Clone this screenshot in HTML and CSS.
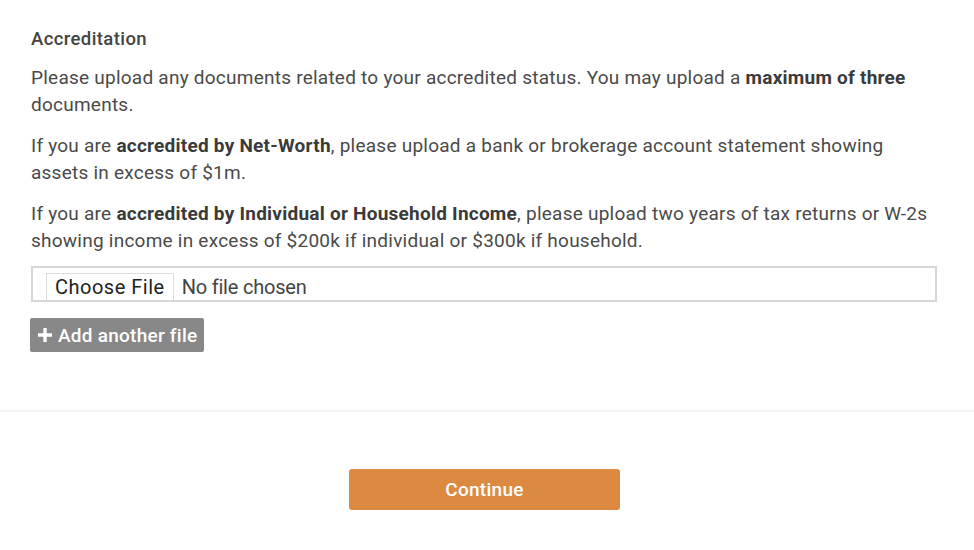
FILE: index.html
```html
<!DOCTYPE html>
<html>
<head>
<meta charset="utf-8">
<link rel="stylesheet" href="styles.css">
</head>
<body>
<div class="section">
  <h3 class="title">Accreditation</h3>
  <p class="para">Please upload any documents related to your accredited status. You may upload a <strong>maximum of three</strong> documents.</p>
  <p class="para">If you are <strong>accredited by Net-Worth</strong>, please upload a bank or brokerage account statement showing assets in excess of $1m.</p>
  <p class="para para-last">If you are <strong>accredited by Individual or Household Income</strong>, please upload two years of tax returns or W-2s showing income in excess of $200k if individual or $300k if household.</p>
  <div class="file-input">
    <span class="file-btn">Choose File</span>
    <span class="file-text">No file chosen</span>
  </div>
  <button class="add-btn"><svg class="plus" viewBox="0 0 14 14" width="14" height="14"><path d="M5.3 0h3.4v5.3H14v3.4H8.7V14H5.3V8.7H0V5.3h5.3z" fill="#fff"/></svg>Add another file</button>
</div>
<div class="footer">
  <button class="continue">Continue</button>
</div>
</body>
</html>
```
FILE: styles.css
```css
html, body {
  margin: 0;
  padding: 0;
  background: #fff;
}
body {
  font-family: Roboto, "Liberation Sans", sans-serif;
  color: #4a4a4a;
}
.section {
  padding: 27px 37px 58px 31px;
  border-bottom: 2px solid #f3f3f3;
}
.title {
  margin: 0 0 13px;
  font-size: 18.5px;
  font-weight: 500;
  letter-spacing: 0.4px;
  line-height: 24px;
  color: #444;
}
.para {
  margin: 0 0 14px;
  font-size: 19px;
  letter-spacing: 0.24px;
  line-height: 27px;
}
.para-last {
  margin-bottom: 12px;
}
.para strong {
  font-weight: 700;
  color: #3a3a3a;
}
.file-input {
  display: flex;
  align-items: stretch;
  height: 32px;
  border: 2px solid #d6d6d6;
  padding-left: 13px;
}
.file-btn {
  display: flex;
  align-items: center;
  margin-top: 5px;
  padding: 0 8px 0 8px;
  border: 1px solid #dcdcdc;
  border-bottom: none;
  font-size: 20px;
  letter-spacing: 0.5px;
  color: #222;
}
.file-text {
  display: flex;
  align-items: center;
  padding-left: 8px;
  padding-top: 5px;
  font-size: 20px;
  letter-spacing: -0.2px;
  color: #444;
}
.add-btn {
  display: flex;
  align-items: center;
  gap: 6px;
  margin-top: 16px;
  margin-left: -1px;
  height: 34px;
  padding: 0 7px 0 8px;
  border: none;
  border-radius: 2px;
  background: #888888;
  color: #fff;
  font-family: Roboto, "Liberation Sans", sans-serif;
  font-size: 19px;
  letter-spacing: 0.25px;
  font-weight: 500;
}
.plus {
  display: block;
}
.footer {
  display: flex;
  justify-content: center;
  padding-top: 57px;
}
.continue {
  width: 271px;
  height: 41px;
  border: none;
  border-radius: 3px;
  background: #dc8a42;
  color: #fff;
  font-family: Roboto, "Liberation Sans", sans-serif;
  font-size: 19px;
  letter-spacing: 0.3px;
  font-weight: 500;
  margin-left: -5px;
}
```
